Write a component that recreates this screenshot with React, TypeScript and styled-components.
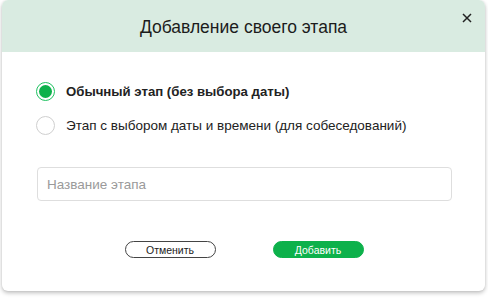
import React, { useState } from "react";
import styled, { createGlobalStyle } from "styled-components";

const Global = createGlobalStyle`
  html, body { margin: 0; padding: 0; background: #ffffff; }
  body { font-family: "Liberation Sans", Arial, sans-serif; }
  * { box-sizing: border-box; }
`;

const Page = styled.div`
  width: 488px;
  height: 298px;
  padding: 0 3px 0 2px;
`;

const Modal = styled.div`
  width: 483px;
  height: 291px;
  background: #fff;
  border-radius: 6px;
  box-shadow: 0 2px 4px rgba(0, 0, 0, 0.25), 0 0 2px rgba(0, 0, 0, 0.08);
  display: flex;
  flex-direction: column;
  overflow: hidden;
`;

const Header = styled.div`
  position: relative;
  height: 52px;
  background: #d9ebe1;
  display: flex;
  align-items: center;
  justify-content: center;
  padding-top: 3px;
`;

const Title = styled.h1`
  margin: 0;
  font-size: 17.5px;
  font-weight: 400;
  color: #1c1c1c;
`;

const Close = styled.button`
  position: absolute;
  top: 10px;
  right: 10px;
  width: 16px;
  height: 16px;
  padding: 0;
  border: 0;
  background: transparent;
  display: flex;
  align-items: center;
  justify-content: center;
  cursor: pointer;
`;

const Body = styled.div`
  display: flex;
  flex-direction: column;
  padding: 30px 33px 0 34px;
`;

const Options = styled.div`
  display: flex;
  flex-direction: column;
  gap: 15px;
`;

const Option = styled.label`
  display: flex;
  align-items: center;
  gap: 11px;
  cursor: pointer;
  height: 19px;
`;

const Circle = styled.span<{ $on: boolean }>`
  width: 19px;
  height: 19px;
  border-radius: 50%;
  border: 1px solid ${(p) => (p.$on ? "#1ec260" : "#cfcfcf")};
  display: flex;
  align-items: center;
  justify-content: center;
  flex-shrink: 0;
  &::after {
    content: "";
    display: ${(p) => (p.$on ? "block" : "none")};
    width: 13px;
    height: 13px;
    border-radius: 50%;
    background: #0db14b;
  }
`;

const OptionText = styled.span<{ $on: boolean }>`
  font-size: ${(p) => (p.$on ? "13.2px" : "13.5px")};
  font-weight: ${(p) => (p.$on ? 700 : 400)};
  color: #222;
`;

const Input = styled.input`
  margin-top: 32px;
  margin-left: 1px;
  width: 415px;
  height: 34px;
  border: 1px solid #dedede;
  border-radius: 4px;
  padding: 0 9px;
  font-family: inherit;
  font-size: 13.5px;
  color: #222;
  outline: none;
  &::placeholder { color: #9a9a9a; }
`;

const Actions = styled.div`
  display: flex;
  justify-content: center;
  gap: 57px;
  margin-top: 40px;
`;

const Btn = styled.button<{ $primary?: boolean }>`
  width: 91px;
  height: 17px;
  border-radius: 9px;
  font-family: inherit;
  font-size: 10.5px;
  padding: 0;
  cursor: pointer;
  border: 1px solid ${(p) => (p.$primary ? "#0db14b" : "#444")};
  background: ${(p) => (p.$primary ? "#0db14b" : "#fff")};
  color: ${(p) => (p.$primary ? "#fff" : "#1c1c1c")};
`;

export default function App() {
  const [sel, setSel] = useState(0);
  const opts = [
    "Обычный этап (без выбора даты)",
    "Этап с выбором даты и времени (для собеседований)",
  ];
  return (
    <Page>
      <Global />
      <Modal>
        <Header>
          <Title>Добавление своего этапа</Title>
          <Close aria-label="close">
            <svg width="10" height="10" viewBox="0 0 10 10">
              <path d="M1 1L9 9M9 1L1 9" stroke="#222" strokeWidth="1.5" />
            </svg>
          </Close>
        </Header>
        <Body>
          <Options>
            {opts.map((o, i) => (
              <Option key={i} onClick={() => setSel(i)}>
                <Circle $on={sel === i} />
                <OptionText $on={sel === i}>{o}</OptionText>
              </Option>
            ))}
          </Options>
          <Input placeholder="Название этапа" />
          <Actions>
            <Btn>Отменить</Btn>
            <Btn $primary>Добавить</Btn>
          </Actions>
        </Body>
      </Modal>
    </Page>
  );
}
